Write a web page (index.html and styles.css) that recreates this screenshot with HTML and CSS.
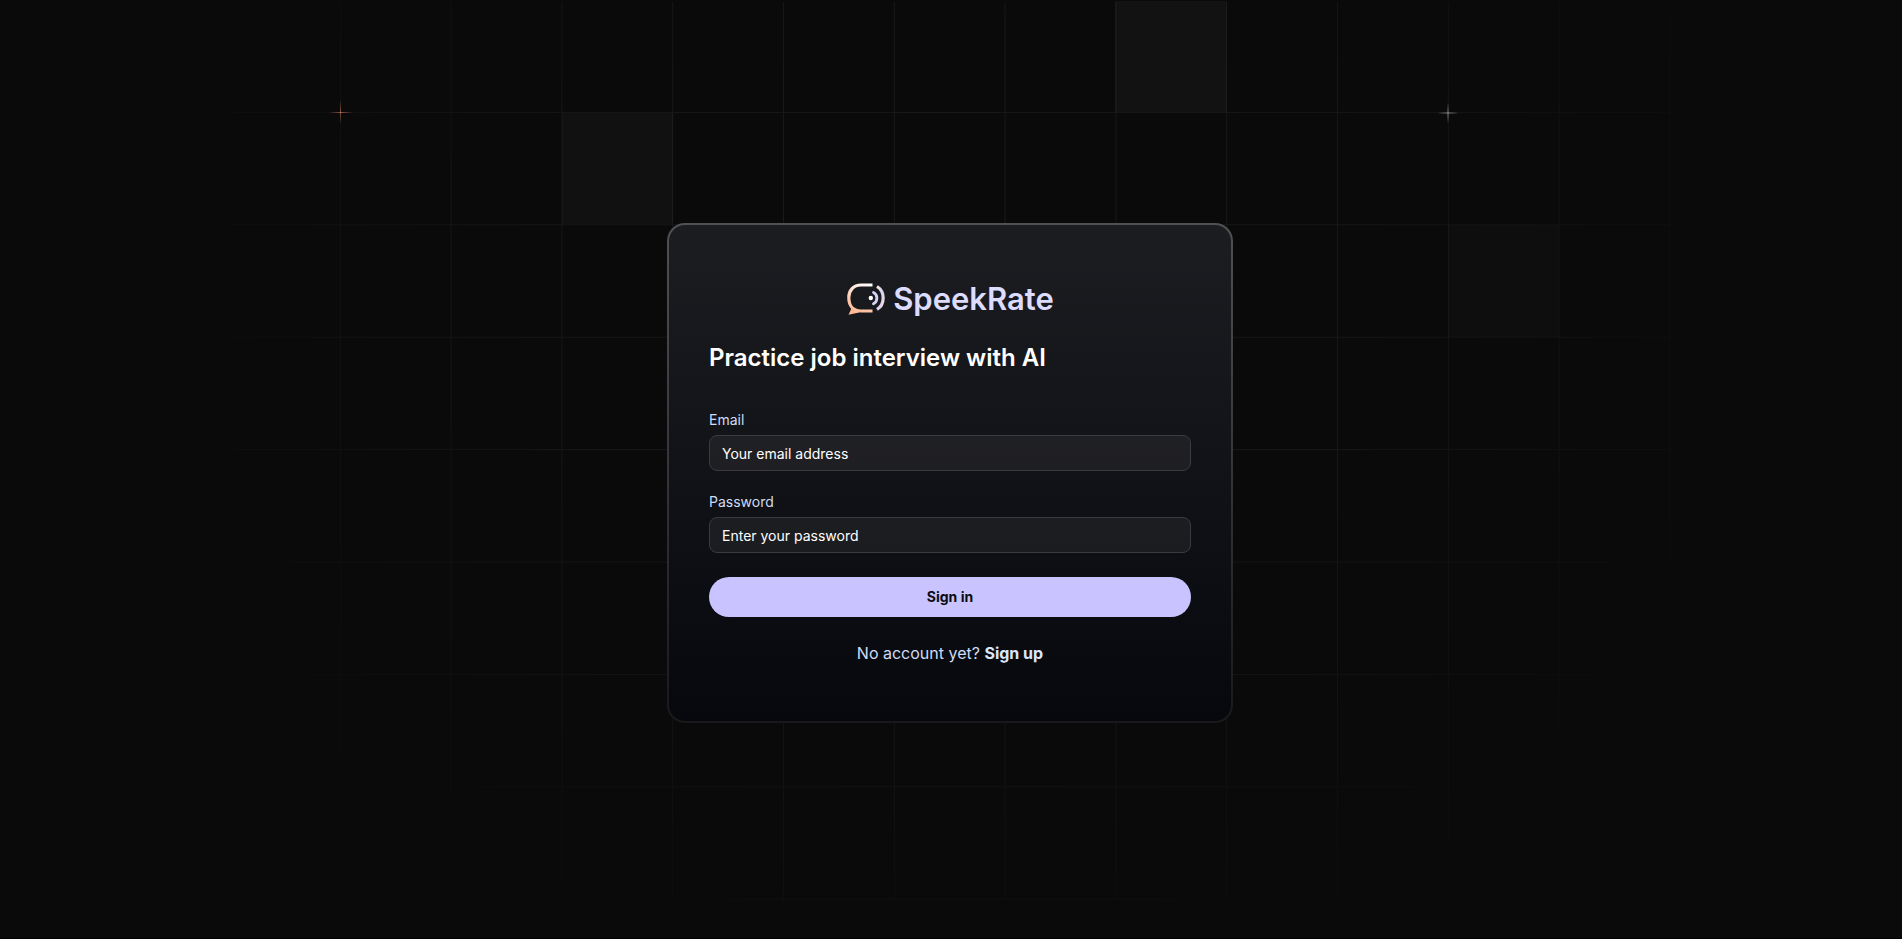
FILE: index.html
```html
<!DOCTYPE html>
<html lang="en">
<head>
<meta charset="utf-8">
<title>SpeekRate - Sign in</title>
<link rel="stylesheet" href="styles.css">
</head>
<body>
<div class="page">
  <svg class="backdrop" viewBox="0 0 1902 939" preserveAspectRatio="xMidYMin slice" aria-hidden="true">
    <defs>
      <pattern id="grid" x="7.4" y="-.5" width="110.8" height="112.4" patternUnits="userSpaceOnUse">
        <path d="M0 .5H110.8M.5 0V112.4" stroke="#fff" stroke-opacity=".065" fill="none"/>
      </pattern>
      <radialGradient id="fade" cx="0" cy="0" r="1" gradientUnits="userSpaceOnUse" gradientTransform="translate(951 290) scale(860 740)">
        <stop offset="0" stop-color="#fff"/>
        <stop offset=".5" stop-color="#fff" stop-opacity=".8"/>
        <stop offset="1" stop-color="#fff" stop-opacity=".1"/>
      </radialGradient>
      <mask id="vignette" maskUnits="userSpaceOnUse" x="0" y="0" width="1902" height="939"><rect x="230" y="2" width="1441" height="898" fill="url(#fade)"/></mask>
      <radialGradient id="warm"><stop offset="0" stop-color="#ff9b7a" stop-opacity=".5"/><stop offset="1" stop-color="#ff9b7a" stop-opacity="0"/></radialGradient>
      <radialGradient id="cool"><stop offset="0" stop-color="#fff" stop-opacity=".45"/><stop offset="1" stop-color="#fff" stop-opacity="0"/></radialGradient>
    </defs>
    <rect x="1115" y="1" width="112" height="111" fill="#121212"/>
    <rect x="562" y="113" width="111" height="111" fill="#111"/>
    <rect x="1448" y="225" width="111" height="112" fill="#0e0e0e"/>
    <rect width="1902" height="939" fill="url(#grid)" mask="url(#vignette)"/>
    <g fill="url(#warm)"><rect x="329" y="112" width="24" height="1"/><rect x="340" y="100" width="1" height="24"/></g>
    <g fill="url(#cool)"><rect x="1436" y="112" width="24" height="2"/><rect x="1447" y="101" width="2" height="24"/></g>
  </svg>
  <main class="card">
    <div class="brand">
      <svg class="brand-icon" viewBox="0 0 40 34" aria-hidden="true">
        <defs>
          <linearGradient id="bubble" x1="22" y1="1" x2="8" y2="33" gradientUnits="userSpaceOnUse"><stop offset="0" stop-color="#fff"/><stop offset=".6" stop-color="#ffcbb0"/><stop offset="1" stop-color="#ffb590"/></linearGradient>
          <linearGradient id="wave" x1="0" y1="0" x2="1" y2="1"><stop offset="0" stop-color="#ffe6dc"/><stop offset=".5" stop-color="#d6d2f6"/><stop offset="1" stop-color="#f3dbdc"/></linearGradient>
        </defs>
        <path d="M26.500 3H15C7.500 3 2.800 8.500 2.800 15.500C2.800 24 7.500 29 15 29H26.500" fill="none" stroke="url(#bubble)" stroke-width="3.200"/>
        <path d="M4 23.500L5.200 27L2.500 32.800L13 30.500V28Z" fill="url(#bubble)"/>
        <circle cx="24.800" cy="16" r="2.200" fill="#fff"/>
        <path d="M27.500 10.500C32 12.500 32 19.500 27.500 21.800" fill="none" stroke="#d6d2f8" stroke-width="2.800" stroke-linecap="round"/>
        <path d="M31 4.500C39.200 9.500 39.200 22.500 31 27.500" fill="none" stroke="url(#wave)" stroke-width="3.200"/>
      </svg>
      <span class="brand-name">SpeekRate</span>
    </div>
    <h1 class="title">Practice job interview with AI</h1>
    <form class="form">
      <div class="field">
        <label class="label" for="email">Email</label>
        <input class="input" id="email" type="email" placeholder="Your email address">
      </div>
      <div class="field">
        <label class="label" for="password">Password</label>
        <input class="input" id="password" type="password" placeholder="Enter your password">
      </div>
      <button class="submit" type="submit">Sign in</button>
    </form>
    <p class="signup">No account yet? <a class="signup-link" href="#">Sign up</a></p>
  </main>
</div>
</body>
</html>
```
FILE: styles.css
```css
* { box-sizing: border-box; }
body {
  margin: 0;
  background: #0a0a0a;
  color: #fff;
  font-family: Inter, "Liberation Sans", sans-serif;
}
.page {
  position: relative;
  min-height: 100vh;
  display: flex;
  flex-direction: column;
  align-items: center;
  justify-content: center;
  padding: 8px 2px 0 0;
  overflow: hidden;
  border-bottom: 1px solid #000;
}
.backdrop {
  position: absolute;
  inset: 0;
  width: 100%;
  height: 100%;
}
.card {
  position: relative;
  width: 100%;
  max-width: 566px;
  padding: 54px 40px 56px;
  border: 2px solid transparent;
  border-radius: 18px;
  background:
    linear-gradient(#1c1d21, #07080d) padding-box,
    linear-gradient(#505153, #19191b) border-box;
}
.brand {
  display: flex;
  align-items: center;
  justify-content: center;
  gap: 7px;
  height: 40px;
}
.brand-icon { width: 40px; height: 34px; }
.brand-name {
  font-size: 31px;
  line-height: 40px;
  font-weight: 600;
  color: #dcdcff;
}
.title {
  margin: 20px 0 0;
  font-size: 24px;
  line-height: 38px;
  font-weight: 600;
}
.form {
  display: flex;
  flex-direction: column;
  margin-top: 32px;
}
.field { margin-bottom: 20px; }
.label {
  display: block;
  margin-bottom: 4px;
  font-size: 14px;
  line-height: 22px;
  color: #cfdcf5;
}
.input {
  display: block;
  width: 100%;
  height: 36px;
  padding: 0 12px;
  border: 1px solid #3a3b3f;
  border-radius: 8px;
  background: rgba(255, 255, 255, .055);
  color: #fff;
  font: 400 14px/20px Inter, "Liberation Sans", sans-serif;
}
.input::placeholder { color: #fff; opacity: 1; }
.submit {
  width: 100%;
  height: 40px;
  margin-top: 4px;
  border: 0;
  border-radius: 20px;
  background: #c9c3ff;
  color: #0b0b12;
  font: 700 14px/20px Inter, "Liberation Sans", sans-serif;
}
.signup {
  margin: 24px 0 0;
  text-align: center;
  font-size: 16px;
  line-height: 24px;
  color: #cfdcf5;
}
.signup-link { color: #dbe6fb; font-weight: 700; text-decoration: none; }
```
